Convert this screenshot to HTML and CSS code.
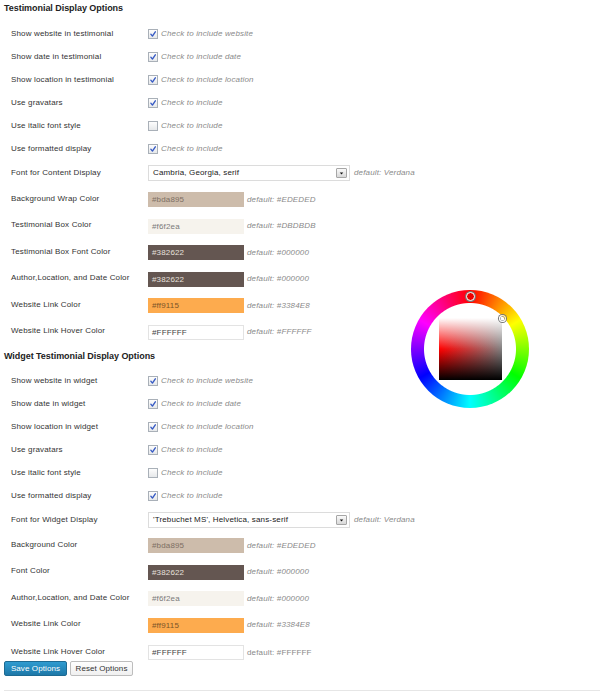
FILE: index.html
```html
<!DOCTYPE html>
<html>
<head>
<meta charset="utf-8">
<link rel="stylesheet" href="styles.css">
</head>
<body>
<div class="page">
  <h3 class="section-title first">Testimonial Display Options</h3>
  <div class="rows">
    <div class="row check"><span class="label">Show website in testimonial</span><span class="field"><span class="cb on"><svg viewBox="0 0 10 10"><path d="M2.3 5.2 L4.3 7.6 L7.9 2.2"/></svg></span><em>Check to include website</em></span></div>
    <div class="row check"><span class="label">Show date in testimonial</span><span class="field"><span class="cb on"><svg viewBox="0 0 10 10"><path d="M2.3 5.2 L4.3 7.6 L7.9 2.2"/></svg></span><em>Check to include date</em></span></div>
    <div class="row check"><span class="label">Show location in testimonial</span><span class="field"><span class="cb on"><svg viewBox="0 0 10 10"><path d="M2.3 5.2 L4.3 7.6 L7.9 2.2"/></svg></span><em>Check to include location</em></span></div>
    <div class="row check"><span class="label">Use gravatars</span><span class="field"><span class="cb on"><svg viewBox="0 0 10 10"><path d="M2.3 5.2 L4.3 7.6 L7.9 2.2"/></svg></span><em>Check to include</em></span></div>
    <div class="row check"><span class="label">Use italic font style</span><span class="field"><span class="cb"></span><em>Check to include</em></span></div>
    <div class="row check"><span class="label">Use formatted display</span><span class="field"><span class="cb on"><svg viewBox="0 0 10 10"><path d="M2.3 5.2 L4.3 7.6 L7.9 2.2"/></svg></span><em>Check to include</em></span></div>
    <div class="row sel"><span class="label">Font for Content Display</span><span class="field"><span class="select"><span class="select-text">Cambria, Georgia, serif</span><span class="select-btn"><svg viewBox="0 0 10 9"><path d="M3 4 L7 4 L5 6.2 Z"/></svg></span></span><em>default: Verdana</em></span></div>
    <div class="row color"><span class="label">Background Wrap Color</span><span class="field"><span class="swatch tan">#bda895</span><em>default: #EDEDED</em></span></div>
    <div class="row color"><span class="label">Testimonial Box Color</span><span class="field"><span class="swatch cream">#f6f2ea</span><em>default: #DBDBDB</em></span></div>
    <div class="row color"><span class="label">Testimonial Box Font Color</span><span class="field"><span class="swatch dark">#382622</span><em>default: #000000</em></span></div>
    <div class="row color"><span class="label">Author,Location, and Date Color</span><span class="field"><span class="swatch dark">#382622</span><em>default: #000000</em></span></div>
    <div class="row color"><span class="label">Website Link Color</span><span class="field"><span class="swatch orange">#ff9115</span><em>default: #3384E8</em></span></div>
    <div class="row color"><span class="label">Website Link Hover Color</span><span class="field"><span class="swatch white">#FFFFFF</span><em>default: #FFFFFF</em></span></div>
  </div>

  <h3 class="section-title second">Widget Testimonial Display Options</h3>
  <div class="rows">
    <div class="row check"><span class="label">Show website in widget</span><span class="field"><span class="cb on"><svg viewBox="0 0 10 10"><path d="M2.3 5.2 L4.3 7.6 L7.9 2.2"/></svg></span><em>Check to include website</em></span></div>
    <div class="row check"><span class="label">Show date in widget</span><span class="field"><span class="cb on"><svg viewBox="0 0 10 10"><path d="M2.3 5.2 L4.3 7.6 L7.9 2.2"/></svg></span><em>Check to include date</em></span></div>
    <div class="row check"><span class="label">Show location in widget</span><span class="field"><span class="cb on"><svg viewBox="0 0 10 10"><path d="M2.3 5.2 L4.3 7.6 L7.9 2.2"/></svg></span><em>Check to include location</em></span></div>
    <div class="row check"><span class="label">Use gravatars</span><span class="field"><span class="cb on"><svg viewBox="0 0 10 10"><path d="M2.3 5.2 L4.3 7.6 L7.9 2.2"/></svg></span><em>Check to include</em></span></div>
    <div class="row check"><span class="label">Use italic font style</span><span class="field"><span class="cb"></span><em>Check to include</em></span></div>
    <div class="row check"><span class="label">Use formatted display</span><span class="field"><span class="cb on"><svg viewBox="0 0 10 10"><path d="M2.3 5.2 L4.3 7.6 L7.9 2.2"/></svg></span><em>Check to include</em></span></div>
    <div class="row sel s2"><span class="label">Font for Widget Display</span><span class="field"><span class="select"><span class="select-text">'Trebuchet MS', Helvetica, sans-serif</span><span class="select-btn"><svg viewBox="0 0 10 9"><path d="M3 4 L7 4 L5 6.2 Z"/></svg></span></span><em>default: Verdana</em></span></div>
    <div class="row color"><span class="label">Background Color</span><span class="field"><span class="swatch tan">#bda895</span><em>default: #EDEDED</em></span></div>
    <div class="row color"><span class="label">Font Color</span><span class="field"><span class="swatch dark">#382622</span><em>default: #000000</em></span></div>
    <div class="row color"><span class="label">Author,Location, and Date Color</span><span class="field"><span class="swatch cream">#f6f2ea</span><em>default: #000000</em></span></div>
    <div class="row color"><span class="label">Website Link Color</span><span class="field"><span class="swatch orange">#ff9115</span><em>default: #3384E8</em></span></div>
    <div class="row color last"><span class="label">Website Link Hover Color</span><span class="field"><span class="swatch white">#FFFFFF</span><em class="plain">default: #FFFFFF</em></span></div>
  </div>

  <div class="buttons">
    <button class="btn primary">Save Options</button>
    <button class="btn secondary">Reset Options</button>
  </div>
  <div class="rule"></div>

  <div class="picker">
    <div class="picker-square"></div>
    <span class="hue-marker"></span>
    <span class="sat-marker"></span>
  </div>
</div>
</body>
</html>
```

FILE: styles.css
```css
* { box-sizing: border-box; }

html, body {
  margin: 0;
  padding: 0;
  background: #fff;
}

body {
  width: 600px;
  height: 695px;
  overflow: hidden;
  font-family: "Liberation Sans", Arial, sans-serif;
  font-size: 8px;
  letter-spacing: 0.15px;
  color: #333;
}

.page {
  position: relative;
  padding-left: 4px;
  height: 695px;
}

.section-title {
  margin: 0;
  height: 16px;
  line-height: 16px;
  font-size: 9px;
  font-weight: bold;
  letter-spacing: -0.05px;
  color: #222;
}

.section-title.first { margin-bottom: 6px; }
.section-title.second { margin-top: 2.5px; margin-bottom: 5.5px; }

.row {
  display: grid;
  grid-template-columns: 144px 1fr;
  align-items: center;
}

.row.check { height: 23px; }
.row.sel { height: 26.5px; }
.row.sel.s2 { height: 25px; }
.row.color { height: 26.5px; }
.row.color.last { height: 22.5px; padding-top: 6px; }

.label {
  padding-left: 7px;
  line-height: 10px;
  white-space: nowrap;
}

.row.color .label { margin-bottom: 2.5px; }

.field {
  display: flex;
  align-items: center;
}

.field em {
  color: #8a8a8a;
  font-style: italic;
  line-height: 10px;
  white-space: nowrap;
}

.field em.plain { font-style: normal; }

.cb {
  width: 10px;
  height: 10px;
  border: 1px solid #a9b0b8;
  background: linear-gradient(#fdfdfd, #e6e8ea);
  margin-right: 3px;
  display: flex;
}

.cb svg {
  width: 8px;
  height: 8px;
}

.cb svg path {
  fill: none;
  stroke: #3559c4;
  stroke-width: 1.7;
  stroke-linecap: round;
  stroke-linejoin: round;
}

.select {
  width: 202px;
  height: 16px;
  border: 1px solid #dcdcdc;
  background: #fff;
  display: flex;
  align-items: center;
  justify-content: space-between;
  padding: 0 2px 0 4px;
  margin-right: 4px;
}

.select-text {
  color: #222;
  white-space: nowrap;
  line-height: 10px;
}

.select-btn {
  width: 11px;
  height: 10px;
  border: 1px solid #a6a6a6;
  border-radius: 1px;
  background: linear-gradient(#fafafa, #d8d8d8);
  display: flex;
  align-items: center;
  justify-content: center;
}

.select-btn svg {
  width: 9px;
  height: 8px;
}

.select-btn svg path { fill: #111; }

.swatch {
  width: 96px;
  height: 15px;
  line-height: 15px;
  padding-left: 4px;
  margin-right: 3px;
  color: #7a7a7a;
  white-space: nowrap;
}

.swatch.tan { background: #cdbcab; color: #7d6f63; }
.swatch.cream { background: #f6f3ed; color: #7a7a7a; }
.swatch.dark { background: #645651; color: #e6e0dd; }
.swatch.orange { background: #fdab4e; color: #7c5428; }
.swatch.white { background: #fff; border: 1px solid #e3e3e3; color: #444; padding-left: 3px; line-height: 13px; }

.buttons {
  display: flex;
  gap: 3px;
  margin-top: 0;
}

.btn {
  height: 15px;
  padding: 0;
  font-family: "Liberation Sans", Arial, sans-serif;
  font-size: 8px;
  letter-spacing: 0.1px;
  border-radius: 2px;
  line-height: 13px;
}

.btn.primary {
  width: 63px;
  color: #fff;
  background: linear-gradient(#2f9bd0, #1d78a8);
  border: 1px solid #1d6a92;
}

.btn.secondary {
  width: 63px;
  color: #333;
  background: linear-gradient(#fefefe, #f0f0f0);
  border: 1px solid #bdbdbd;
}

.rule {
  margin-top: 13.5px;
  height: 1px;
  background: #e6e6e6;
}

.picker {
  position: absolute;
  left: 411px;
  top: 289.5px;
  width: 118px;
  height: 118px;
  border-radius: 50%;
  background:
    radial-gradient(circle, #fff 0 45.5px, rgba(255,255,255,0) 46.5px),
    conic-gradient(#f00, #ff0, #0f0, #0ff, #00f, #f0f, #f00);
}

.picker-square {
  position: absolute;
  left: 28px;
  top: 28.5px;
  width: 63px;
  height: 62px;
  background:
    linear-gradient(to bottom, #fff 0%, rgba(255,255,255,0) 50%, rgba(0,0,0,0) 50%, #000 100%),
    linear-gradient(to right, #f00, #808080);
}

.hue-marker {
  position: absolute;
  left: 55px;
  top: 2.5px;
  width: 9px;
  height: 9px;
  border-radius: 50%;
  background: #e00;
  border: 1.5px solid #fff;
  box-shadow: 0 0 0 1px #777;
}

.sat-marker {
  position: absolute;
  left: 87.5px;
  top: 25px;
  width: 7px;
  height: 7px;
  border-radius: 50%;
  border: 1.5px solid #fff;
  box-shadow: 0 0 0 1px #777, inset 0 0 0 0.5px #777;
}
```
